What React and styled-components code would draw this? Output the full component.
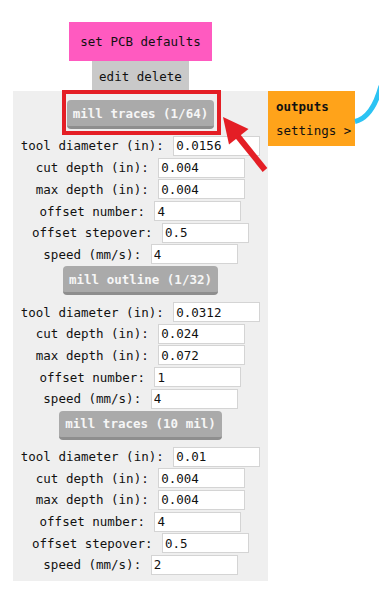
import React from "react";
import styled, { createGlobalStyle } from "styled-components";

const GlobalStyle = createGlobalStyle`
  html, body { margin: 0; padding: 0; background: #ffffff; }
  body { font-family: "DejaVu Sans Mono", "Liberation Mono", monospace; font-size: 12.5px; color: #111; }
`;

const Canvas = styled.div`
  position: relative;
  width: 379px;
  height: 594px;
  overflow: hidden;
  padding: 22px 0 0 13px;
  box-sizing: border-box;
`;

const Node = styled.div`
  display: flex;
  flex-direction: column;
  align-items: flex-start;
`;

const Header = styled.div`
  width: 255px;
  display: flex;
  flex-direction: column;
  align-items: center;
`;

const DefaultsButton = styled.div`
  background: #ff5ac0;
  height: 39px;
  padding: 0 11.5px;
  display: flex;
  align-items: center;
  white-space: pre;
`;

const EditBar = styled.div`
  background: #c9c9c9;
  height: 30px;
  padding: 0 7.25px;
  display: flex;
  align-items: center;
  white-space: pre;
`;

const BodyRow = styled.div`
  display: flex;
  align-items: flex-start;
`;

const Panel = styled.div`
  width: 255px;
  background: #efefef;
  display: flex;
  flex-direction: column;
  align-items: center;
  gap: 1.7px;
  padding: 9px 0 6.3px;
  box-sizing: border-box;
`;

const MillButton = styled.div`
  position: relative;
  height: 26px;
  border-bottom: 3px solid #8e8e8e;
  border-radius: 4px;
  background: #aaaaaa;
  color: #f6f6f6;
  font-weight: bold;
  padding: 0 6px;
  margin-bottom: 5.3px;
  display: flex;
  align-items: center;
  white-space: pre;

  ${(p) =>
    p.$highlight &&
    `
    &::after {
      content: "";
      position: absolute;
      left: -5px;
      right: -7px;
      top: -10px;
      bottom: -9px;
      border: 4.5px solid #e41e25;
      pointer-events: none;
    }
  `}
`;

const Field = styled.label`
  display: flex;
  align-items: center;
  gap: 9.5px;
  height: 20px;
  white-space: pre;
`;

const FieldInput = styled.input`
  width: 87px;
  height: 20px;
  box-sizing: border-box;
  border: 1.5px solid #d4d4d4;
  background: #fff;
  padding: 0 2px;
  margin: 0;
  font-family: "DejaVu Sans Mono", "Liberation Mono", monospace;
  font-size: 12.5px;
  color: #111;
  outline: none;
`;

const OutputsBox = styled.div`
  width: 87px;
  height: 55px;
  box-sizing: border-box;
  background: #ffa31a;
  padding: 4px 8px 7px;
  line-height: 24px;
  white-space: pre;
`;

const OutputsTitle = styled.div`
  font-weight: bold;
`;

const Overlay = styled.svg`
  position: absolute;
  left: 0;
  top: 0;
  pointer-events: none;
`;

const sections = [
  {
    title: "mill traces (1/64)",
    highlight: true,
    fields: [
      ["tool diameter (in):", "0.0156"],
      ["cut depth (in):", "0.004"],
      ["max depth (in):", "0.004"],
      ["offset number:", "4"],
      ["offset stepover:", "0.5"],
      ["speed (mm/s):", "4"],
    ],
  },
  {
    title: "mill outline (1/32)",
    fields: [
      ["tool diameter (in):", "0.0312"],
      ["cut depth (in):", "0.024"],
      ["max depth (in):", "0.072"],
      ["offset number:", "1"],
      ["speed (mm/s):", "4"],
    ],
  },
  {
    title: "mill traces (10 mil)",
    fields: [
      ["tool diameter (in):", "0.01"],
      ["cut depth (in):", "0.004"],
      ["max depth (in):", "0.004"],
      ["offset number:", "4"],
      ["offset stepover:", "0.5"],
      ["speed (mm/s):", "2"],
    ],
  },
];

export default function App() {
  return (
    <>
      <GlobalStyle />
      <Canvas>
        <Node>
          <Header>
            <DefaultsButton>set PCB defaults</DefaultsButton>
            <EditBar>edit delete</EditBar>
          </Header>
          <BodyRow>
            <Panel>
              {sections.map((s, i) => (
                <React.Fragment key={i}>
                  <MillButton $highlight={s.highlight}>{s.title}</MillButton>
                  {s.fields.map(([label, value], j) => (
                    <Field key={j}>
                      <span>{label}</span>
                      <FieldInput defaultValue={value} />
                    </Field>
                  ))}
                </React.Fragment>
              ))}
            </Panel>
            <OutputsBox>
              <OutputsTitle>outputs</OutputsTitle>
              <div>settings &gt;</div>
            </OutputsBox>
          </BodyRow>
        </Node>
        <Overlay width="379" height="594" viewBox="0 0 379 594">
          <path
            d="M355 121.5 C 366 119, 375 108, 381 86"
            fill="none"
            stroke="#2cc3f3"
            strokeWidth="5"
          />
          <line x1="265" y1="170" x2="236" y2="134" stroke="#e41e25" strokeWidth="6" />
          <polygon points="223,117 248.5,129 229,144.5" fill="#e41e25" />
        </Overlay>
      </Canvas>
    </>
  );
}
